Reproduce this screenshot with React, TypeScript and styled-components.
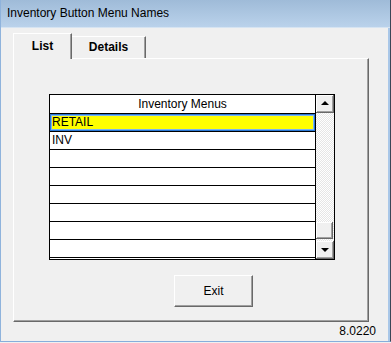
import React from 'react';
import styled, { createGlobalStyle } from 'styled-components';

const GlobalStyle = createGlobalStyle`
  html, body {
    margin: 0;
    padding: 0;
    background: #f0f0f0;
  }
  * {
    box-sizing: border-box;
  }
`;

const Window = styled.div`
  width: 391px;
  height: 342px;
  display: flex;
  flex-direction: column;
  background: #f0f0f0;
  border-left: 1px solid #8fb3dc;
  border-right: 1px solid #3a4656;
  border-bottom: 1px solid #86aedb;
  box-shadow: inset -2px 0 0 #a9c7e8;
  font-family: "Liberation Sans", Arial, sans-serif;
  font-size: 12px;
  color: #000;
`;

const TitleBar = styled.div`
  height: 28px;
  flex: none;
  display: flex;
  align-items: center;
  padding: 0 0 1px 6px;
  background: linear-gradient(#9fbbd8, #bad2eb);
  border-bottom: 1px solid #d6e4f2;
  color: #000;
`;

const Client = styled.div`
  flex: 1;
  display: flex;
  flex-direction: column;
  padding: 5px 0 0 12px;
`;

const TabStrip = styled.div`
  height: 25px;
  display: flex;
  align-items: flex-end;
  position: relative;
  z-index: 1;
`;

const Tab = styled.div<{ $active?: boolean; $width: number }>`
  width: ${p => p.$width}px;
  height: ${p => (p.$active ? 26 : 22)}px;
  margin-bottom: ${p => (p.$active ? -1 : 0)}px;
  display: flex;
  align-items: center;
  justify-content: center;
  padding-bottom: ${p => (p.$active ? 2 : 1)}px;
  font-weight: bold;
  background: #f0f0f0;
  border-top: 1px solid #fff;
  border-left: ${p => (p.$active ? '1px solid #fff' : 'none')};
  border-right: 1px solid #696969;
  box-shadow: inset -1px 0 0 #a0a0a0;
`;

const Panel = styled.div`
  width: 356px;
  height: 264px;
  display: flex;
  flex-direction: column;
  align-items: flex-start;
  padding: 35px 0 0 35px;
  border-top: 1px solid #fff;
  border-left: 1px solid #fff;
  border-right: 1px solid #696969;
  border-bottom: 1px solid #696969;
  box-shadow: inset -1px -1px 0 #a0a0a0;
`;

const Grid = styled.div`
  width: 286px;
  height: 166px;
  display: flex;
  border: 1px solid #000;
  background: #fff;
`;

const Column = styled.div`
  width: 266px;
  display: flex;
  flex-direction: column;
  border-right: 1px solid #000;
  padding-bottom: 1px;
  background: #fff;
`;

const HeaderCell = styled.div`
  height: 19px;
  display: flex;
  align-items: center;
  justify-content: center;
  border-bottom: 1px solid #000;
  padding-bottom: 1px;
`;

const Row = styled.div<{ $selected?: boolean }>`
  height: 18px;
  display: flex;
  align-items: center;
  padding: 0 0 1px 2px;
  border-bottom: 1px solid #000;
  background: ${p => (p.$selected ? '#ffff00' : '#fff')};
  box-shadow: ${p =>
    p.$selected ? 'inset 0 0 0 1px #2a78d4, inset 0 0 0 2px #7cb6ee' : 'none'};
`;

const ScrollBar = styled.div`
  width: 18px;
  display: flex;
  flex-direction: column;
  background: repeating-conic-gradient(#fff 0 25%, #e6e6e6 0 50%) 0 0 / 2px 2px;
`;

const ScrollButton = styled.div`
  height: 18px;
  width: 18px;
  display: flex;
  align-items: center;
  justify-content: center;
  background: #f0f0f0;
  border-right: 1px solid #696969;
  border-bottom: 1px solid #696969;
  box-shadow: inset 1px 1px 0 #fff, inset -1px -1px 0 #a0a0a0;
`;

const Track = styled.div`
  flex: 1;
  display: flex;
  flex-direction: column;
  justify-content: flex-end;
  padding-bottom: 2px;
`;

const Thumb = styled.div`
  height: 17px;
  width: 17px;
  background: #f0f0f0;
  border-right: 1px solid #696969;
  border-bottom: 1px solid #696969;
  box-shadow: inset 1px 1px 0 #fff, inset -1px -1px 0 #a0a0a0;
`;

const Arrow = styled.div<{ $down?: boolean }>`
  width: 0;
  height: 0;
  border-left: 4px solid transparent;
  border-right: 4px solid transparent;
  ${p => (p.$down ? 'border-top: 4px solid #000;' : 'border-bottom: 4px solid #000;')}
  margin-top: ${p => (p.$down ? 1 : -1)}px;
`;

const ExitButton = styled.button`
  margin: 15px 0 0 125px;
  width: 79px;
  height: 32px;
  padding: 0 0 1px;
  font-family: inherit;
  font-size: 12px;
  color: #000;
  background: #f0f0f0;
  border: none;
  border-top: 1px solid #fff;
  border-left: 1px solid #fff;
  border-right: 1px solid #696969;
  border-bottom: 1px solid #696969;
  box-shadow: inset -1px -1px 0 #a0a0a0;
`;

const Footer = styled.div`
  flex: 1;
  display: flex;
  justify-content: flex-end;
  align-items: center;
  padding: 0 14px 2px 0;
`;

const menus = ['RETAIL', 'INV', '', '', '', '', '', ''];

const App: React.FC = () => {
  return (
    <>
      <GlobalStyle />
      <Window>
        <TitleBar>Inventory Button Menu Names</TitleBar>
        <Client>
          <TabStrip>
            <Tab $active $width={59}>List</Tab>
            <Tab $width={74}>Details</Tab>
          </TabStrip>
          <Panel>
            <Grid>
              <Column>
                <HeaderCell>Inventory Menus</HeaderCell>
                {menus.map((name, i) => (
                  <Row key={i} $selected={i === 0}>{name}</Row>
                ))}
              </Column>
              <ScrollBar>
                <ScrollButton><Arrow /></ScrollButton>
                <Track><Thumb /></Track>
                <ScrollButton><Arrow $down /></ScrollButton>
              </ScrollBar>
            </Grid>
            <ExitButton>Exit</ExitButton>
          </Panel>
          <Footer>8.0220</Footer>
        </Client>
      </Window>
    </>
  );
};

export default App;
